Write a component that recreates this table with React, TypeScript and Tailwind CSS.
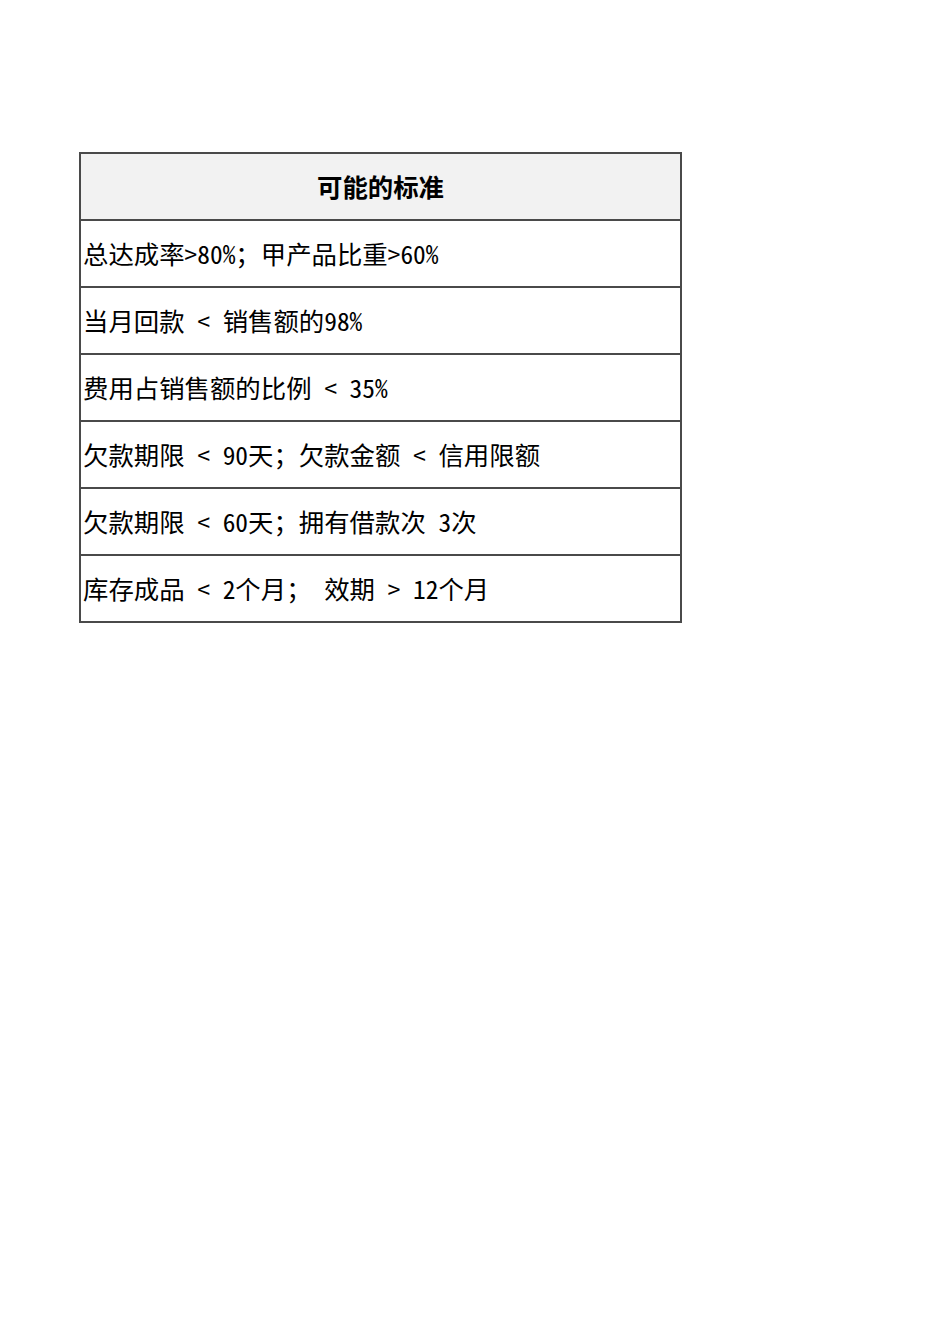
import React from "react";

const rows = [
  "总达成率>80%；甲产品比重>60%",
  "当月回款 < 销售额的98%",
  "费用占销售额的比例 < 35%",
  "欠款期限 < 90天；欠款金额 < 信用限额",
  "欠款期限 < 60天；拥有借款次 3次",
  "库存成品 < 2个月； 效期 > 12个月",
];

export default function App() {
  return (
    <div className="min-h-[1344px] w-[950px] bg-white pt-[152px] pl-[79px]" style={{ fontFamily: '"Noto Sans Mono CJK SC", "Noto Sans CJK SC", monospace' }}>
      <div className="flex w-[603px] flex-col border-2 border-[#4a4a4a]">
        <div className="flex h-[65px] items-center justify-center bg-[#f2f2f2] text-[25.4px] font-bold text-black">
          可能的标准
        </div>
        {rows.map((r) => (
          <div key={r} className="flex h-[67px] items-center border-t-2 border-[#4a4a4a] pl-[2px] text-[25.4px] text-black whitespace-pre">
            {r}
          </div>
        ))}
      </div>
    </div>
  );
}
